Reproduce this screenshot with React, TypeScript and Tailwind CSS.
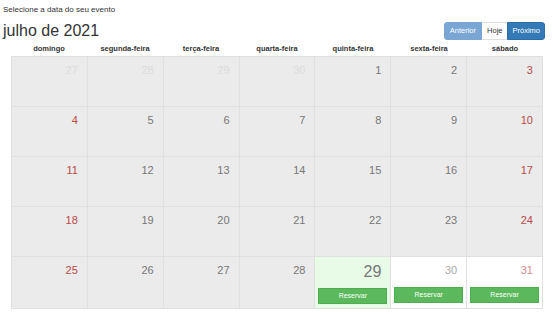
import React from "react";

const WEEKDAYS = ["domingo", "segunda-feira", "terça-feira", "quarta-feira", "quinta-feira", "sexta-feira", "sábado"];

type Day = { n: number; other?: boolean };

const WEEKS: Day[][] = [
  [{ n: 27, other: true }, { n: 28, other: true }, { n: 29, other: true }, { n: 30, other: true }, { n: 1 }, { n: 2 }, { n: 3 }],
  [4, 5, 6, 7, 8, 9, 10].map((n) => ({ n })),
  [11, 12, 13, 14, 15, 16, 17].map((n) => ({ n })),
  [18, 19, 20, 21, 22, 23, 24].map((n) => ({ n })),
  [25, 26, 27, 28, 29, 30, 31].map((n) => ({ n })),
];

function DayCell({ day, col, last }: { day: Day; col: number; last: boolean }) {
  const weekend = col === 0 || col === 6;
  const isToday = last && day.n === 29;
  const isFuture = last && day.n > 29;
  const bookable = last && day.n >= 29;

  let bg = "bg-[#ebebeb]";
  if (isToday) bg = "bg-[#e7fbe6]";
  if (isFuture) bg = "bg-white";

  let color = "text-[#777]";
  if (weekend) color = "text-[#b94a48]";
  if (day.other) color = "text-[#dcdcdc]";
  if (isFuture) color = weekend ? "text-[#d9898a]" : "text-[#aaa]";

  return (
    <div className={`${bg} border-r border-b border-[#e0e0e0] flex flex-col ${last ? "h-[52px]" : "h-[50px]"}`}>
      <div
        className={`text-right pr-[9px] ${color} ${isToday ? "text-[16px] leading-[18px] pt-[6px]" : "text-[11px] leading-[13px] pt-[7px]"}`}
      >
        {day.n}
      </div>
      {bookable && (
        <div className="mt-auto mb-[4px] px-[3px]">
          <button className="w-full h-[16px] bg-[#5cb85c] text-white text-[7px] leading-[14px] border border-[#4cae4c]">
            Reservar
          </button>
        </div>
      )}
    </div>
  );
}

export default function App() {
  return (
    <div className="w-[553px] h-[314px] bg-white overflow-hidden px-[3px] font-['Liberation_Sans',Arial,sans-serif] text-[#333]">
      <div className="text-[8px] leading-[10px] pt-[5px]">Selecione a data do seu evento</div>

      {/* toolbar */}
      <div className="flex items-end justify-between mt-[6px]">
        <h2 className="text-[16px] leading-[20px]">julho de 2021</h2>
        <div className="flex text-[7.5px] leading-[16px] mr-[5px] mb-[1px]">
          <button className="bg-[#7aa6d4] text-white px-[5px] h-[18px] rounded-l-[3px] border border-[#7aa6d4]">Anterior</button>
          <button className="bg-white text-[#333] px-[5px] h-[18px] border-y border-[#e0e0e0]">Hoje</button>
          <button className="bg-[#337ab7] text-white px-[4px] h-[18px] rounded-r-[3px] border border-[#2e6da4]">Próximo</button>
        </div>
      </div>

      {/* calendar */}
      <div className="ml-[8px] w-[532px] mt-[2px]">
        <div className="grid grid-cols-7">
          {WEEKDAYS.map((d) => (
            <div key={d} className="text-center font-bold text-[7.5px] leading-[12px] pb-[1px]">
              {d}
            </div>
          ))}
        </div>
        <div className="grid grid-cols-7 border-l border-t border-[#e0e0e0]">
          {WEEKS.map((week, wi) =>
            week.map((day, ci) => (
              <DayCell key={`${wi}-${ci}`} day={day} col={ci} last={wi === WEEKS.length - 1} />
            ))
          )}
        </div>
      </div>
    </div>
  );
}
